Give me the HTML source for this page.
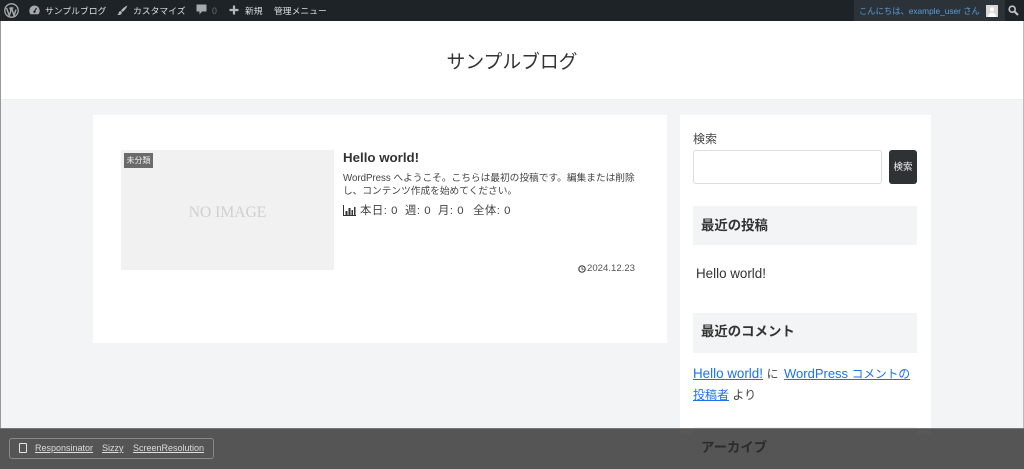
<!DOCTYPE html>
<html lang="ja">
<head>
<meta charset="utf-8">
<title>サンプルブログ</title>
<style>
*{box-sizing:border-box}
html,body{margin:0;padding:0}
html{background:#f3f4f6}
body{width:1024px;height:469px;overflow:hidden;position:relative;background:#f3f4f6;font-family:"Liberation Sans","Noto Sans CJK JP",sans-serif;color:#333;filter:blur(.3px)}
.a{position:absolute;white-space:nowrap}
#bar{left:0;top:0;width:1024px;height:21px;background:#1d2327}
#bar .t{position:absolute;top:1px;line-height:21px;font-size:8.8px;color:#dcdfe2;white-space:nowrap}
#bar svg{position:absolute}
#hd{left:0;top:21px;width:1024px;height:79px;background:#fff;border-bottom:1px solid #eceef0}
#title{left:0;width:1024px;top:49px;text-align:center;font-size:18.8px;line-height:26px;color:#333}
.card{background:#fff}
.wt{left:693px;width:224px;background:#f3f4f6;font-weight:bold;font-size:13.4px;padding-left:8px;color:#333}
a{color:#1a73e8;text-decoration:underline}
.s{font-size:11.4px;line-height:15px;color:#444;top:204px;letter-spacing:.5px}
.j{font-size:11.7px}
#ov{left:0;top:428px;width:1024px;height:41px;background:rgba(42,42,42,.79);border-top:1px solid #777}
#box{left:9px;top:438px;width:205px;height:21px;border:1px solid #8a8a8a;border-radius:3px}
#box span{position:absolute;top:0;line-height:19px;font-size:9px;color:#ddd;text-decoration:underline;white-space:nowrap}
#edgeL{left:0;top:21px;width:1px;height:407px;background:#999}
#edgeR{left:1023px;top:21px;width:1px;height:407px;background:#bbb}
</style>
</head>
<body>
<div class="a" id="hd"></div>
<div class="a" id="title">サンプルブログ</div>

<div class="a card" style="left:93px;top:115px;width:574px;height:228px"></div>
<div class="a" style="left:121px;top:150px;width:213px;height:120px;background:#f1f1f1"></div>
<div class="a" style="left:121px;top:203px;width:213px;text-align:center;font:15.6px/20px 'Liberation Serif',serif;color:#cfcfcf">NO IMAGE</div>
<div class="a" style="left:124px;top:153px;width:29px;height:15px;background:#6b6b6b;color:#f0f0f0;font-size:8px;line-height:15px;text-align:center">未分類</div>
<div class="a" style="left:343px;top:149px;font-size:13.3px;font-weight:bold;line-height:18px;color:#333">Hello world!</div>
<div class="a" style="left:343px;top:172px;font-size:9.7px;line-height:13px;color:#444">WordPress へようこそ。こちらは最初の投稿です。編集または削除<br>し、コンテンツ作成を始めてください。</div>
<svg class="a" style="left:343px;top:205px" width="13" height="11" viewBox="0 0 13 11"><path d="M0.500 0V10.500H13" stroke="#333" fill="none"/><path d="M2.500 6h2v4h-2zM5.500 3h2v7h-2zM8.500 5h1.500v5h-1.500zM11 2h1.500v8h-1.500z" fill="#333"/></svg>
<div class="a s" style="left:360px">本日: 0</div>
<div class="a s" style="left:405px">週: 0</div>
<div class="a s" style="left:438px">月: 0</div>
<div class="a s" style="left:473px">全体: 0</div>
<svg class="a" style="left:578px;top:265px" width="8" height="8" viewBox="0 0 8 8"><circle cx="4" cy="4" r="3.200" stroke="#444" stroke-width="1.200" fill="none"/><path d="M4 2v2.200h1.700" stroke="#444" fill="none" stroke-width=".8"/></svg>
<div class="a" style="left:587px;top:262px;font-size:9.600px;line-height:13px;color:#555">2024.12.23</div>

<div class="a card" style="left:680px;top:115px;width:251px;height:320px"></div>
<div class="a" style="left:693px;top:131px;font-size:12px;line-height:17px;color:#444">検索</div>
<div class="a" style="left:693px;top:150px;width:189px;height:34px;background:#fff;border:1px solid #ddd;border-radius:3px"></div>
<div class="a" style="left:889px;top:150px;width:28px;height:34px;background:#2e3235;border-radius:3px;color:#eee;font-size:9.500px;line-height:35px;text-align:center">検索</div>
<div class="a wt" style="top:206px;height:39px;line-height:39px">最近の投稿</div>
<div class="a" style="left:696px;top:265px;font-size:13.400px;line-height:18px;color:#333">Hello world!</div>
<div class="a wt" style="top:313px;height:40px;line-height:38px">最近のコメント</div>
<div class="a" style="left:693px;top:363px;font-size:13.400px;line-height:22px;color:#444"><a href="#">Hello world!</a> <span class="j">に</span></div>
<div class="a" style="left:784px;top:363px;font-size:13px;line-height:22px;color:#444"><a href="#">WordPress <span class="j">コメントの</span></a></div>
<div class="a" style="left:693px;top:384px;font-size:12px;line-height:22px;color:#444"><a href="#">投稿者</a> より</div>
<div class="a wt" style="top:427px;height:42px;line-height:42px">アーカイブ</div>

<div class="a" id="edgeL"></div>
<div class="a" id="edgeR"></div>

<div class="a" id="ov"></div>
<div class="a" id="box">
<svg style="position:absolute;left:9px;top:4px" width="8" height="10" viewBox="0 0 8 10"><rect x=".5" y=".5" width="7" height="9" rx=".5" fill="none" stroke="#e4e4e4" stroke-width="1"/></svg>
<span style="left:25px">Responsinator</span>
<span style="left:92px">Sizzy</span>
<span style="left:123px">ScreenResolution</span>
</div>

<div class="a" id="bar">
<svg style="left:4px;top:3px" width="15" height="15" viewBox="0 0 15 15"><circle cx="7.500" cy="7.500" r="6.700" fill="none" stroke="#a7aaad" stroke-width="1.300"/><path d="M2.500 5l2.800 7.500 1.600-4.700-1-2.800M5.500 5h4M7.500 5l2.500 7.500 2-6" fill="none" stroke="#a7aaad" stroke-width="1.400"/></svg>
<svg style="left:29px;top:5px" width="11" height="10" viewBox="0 0 11 10"><path d="M5.500 .5a5.200 5.200 0 0 0-5.200 5.200c0 1.400.5 2.600 1.300 3.500h7.800a5.200 5.200 0 0 0 1.300-3.500A5.200 5.200 0 0 0 5.500 .5z" fill="#a7aaad"/><path d="M5.500 6.500L7.500 3" stroke="#1d2327" stroke-width="1.200"/><circle cx="5.500" cy="6.800" r="1.200" fill="#1d2327"/></svg>
<span class="t" style="left:45px">サンプルブログ</span>
<svg style="left:117px;top:5px" width="11" height="11" viewBox="0 0 11 11"><path d="M10.500 .5C8 1.500 5.500 3.500 4 5.500l1.500 1.500C7.500 5.500 9.500 3 10.500 .5zM3.500 6C2 6.200 1.800 7.500 1.500 8.500 1.300 9.200.8 9.500.2 9.700c1.600.6 3.800.4 4.500-1.300.3-.8 0-1.500-.3-1.800z" fill="#b5b8ba"/></svg>
<span class="t" style="left:133px">カスタマイズ</span>
<svg style="left:196px;top:4px" width="11" height="11" viewBox="0 0 11 11"><path d="M1 .5h9a.5.500 0 0 1 .5.500v6a.5.500 0 0 1-.5.500H6L3.500 10.500V7.500H1A.5.500 0 0 1 .5 7V1A.5.500 0 0 1 1 .5z" fill="#a7aaad"/></svg>
<span class="t" style="left:212px;color:#6d7174">0</span>
<svg style="left:229px;top:5px" width="10" height="10" viewBox="0 0 10 10"><path d="M5 .5v9M.5 5h9" stroke="#b5b8ba" stroke-width="2.200"/></svg>
<span class="t" style="left:245px">新規</span>
<span class="t" style="left:274px">管理メニュー</span>
<div style="position:absolute;left:854px;top:0;width:151px;height:21px;background:#2c3338"></div>
<span class="t" style="left:859px;color:#5b9dd9;font-size:8.300px">こんにちは、example_user さん</span>
<div style="position:absolute;left:986px;top:5px;width:12px;height:12px;background:#d8d8d8"></div>
<svg style="left:986px;top:5px" width="12" height="12" viewBox="0 0 12 12"><circle cx="6" cy="4.500" r="2.200" fill="#fff"/><path d="M2 12c0-3 2-4.500 4-4.500s4 1.500 4 4.500z" fill="#fff"/></svg>
<svg style="left:1008px;top:5px" width="11" height="11" viewBox="0 0 11 11"><circle cx="4.200" cy="4.200" r="3" fill="none" stroke="#c3c4c7" stroke-width="1.600"/><path d="M6.500 6.500l3.500 3.500" stroke="#c3c4c7" stroke-width="2"/></svg>
</div>
</body>
</html>
